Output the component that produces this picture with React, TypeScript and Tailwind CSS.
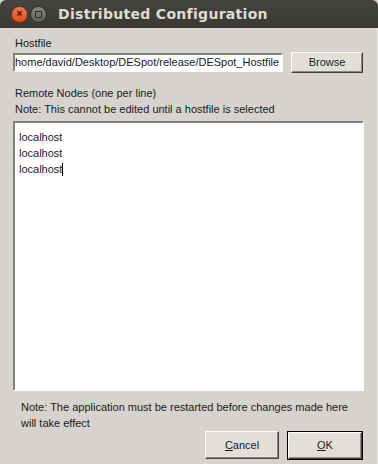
export default function App() {
  const sunken =
    "border-t-[#808080] border-l-[#808080] border-b-white border-r-white";
  const raised =
    "border-t-white border-l-white border-b-[#404040] border-r-[#404040] shadow-[inset_-1px_-1px_0_#8a8884]";

  return (
    <div
      className="w-[378px] h-[464px] flex flex-col bg-[#d6d3ce] text-[11px] text-[#1a1a1a] overflow-hidden"
      style={{ fontFamily: '"Liberation Sans", Arial, sans-serif' }}
    >
      {/* title bar */}
      <div className="h-[28px] shrink-0 flex items-center bg-gradient-to-b from-[#45443f] to-[#3a3935] rounded-t-[6px]">
        <div className="ml-[11px] w-[17px] h-[17px] rounded-full bg-gradient-to-b from-[#f37a50] to-[#df4a16] border border-[#7a2a10] flex items-center justify-center text-[#3b1306] text-[10px] font-bold leading-none">
          ×
        </div>
        <div className="ml-[2px] w-[17px] h-[17px] rounded-full bg-gradient-to-b from-[#8a8985] to-[#5f5e5a] border border-[#2e2d2a] flex items-center justify-center">
          <div className="w-[7px] h-[7px] border border-[#2e2d2a]" />
        </div>
        <span
          className="ml-[11px] text-[15px] font-bold text-[#dfdbd2] tracking-[0.3px]"
          style={{ fontFamily: '"DejaVu Sans", "Liberation Sans", sans-serif', fontSize: "14px" }}
        >
          Distributed Configuration
        </span>
      </div>

      {/* body */}
      <div className="flex-1 flex flex-col pl-[13px] pr-[14px] border-r border-[#ecebe8]">
        <div className="mt-[9px] ml-[2px] leading-[13px]">Hostfile</div>

        <div className="mt-[1px] flex items-center h-[22px]">
          <div
            className={`w-[270px] h-[19px] bg-white border-2 ${sunken} overflow-hidden whitespace-nowrap leading-[15px] text-[11px]`}
          >
            home/david/Desktop/DESpot/release/DESpot_Hostfile
          </div>
          <button
            className={`ml-[8px] w-[72px] h-[21px] bg-[#e2dfdb] border ${raised} text-[11px] leading-none`}
          >
            Browse
          </button>
        </div>

        <div className="mt-[14px] ml-[2px] leading-[13px]">Remote Nodes (one per line)</div>
        <div className="mt-[3px] ml-[2px] leading-[13px]">
          Note: This cannot be edited until a hostfile is selected
        </div>

        <div
          className={`mt-[5px] w-[351px] h-[270px] bg-white border-2 ${sunken} pt-[6px] pl-[4px] leading-[16px]`}
        >
          <div>localhost</div>
          <div>localhost</div>
          <div className="flex items-center">
            localhost
            <span className="inline-block w-px h-[13px] bg-black" />
          </div>
        </div>

        <div className="mt-[8px] ml-[8px] leading-[16px]">
          <div>Note: The application must be restarted before changes made here</div>
          <div>will take effect</div>
        </div>

        <div className="mt-0 flex justify-end">
          <button
            className={`w-[74px] h-[28px] bg-[#e2dfdb] border ${raised} text-[11px]`}
          >
            <span className="underline">C</span>ancel
          </button>
          <button className="ml-[8px] w-[76px] h-[29px] border border-black">
            <div
              className={`w-full h-full bg-[#e2dfdb] border ${raised} flex items-center justify-center text-[11px]`}
            >
              <span className="underline">O</span>K
            </div>
          </button>
        </div>
      </div>
    </div>
  );
}
